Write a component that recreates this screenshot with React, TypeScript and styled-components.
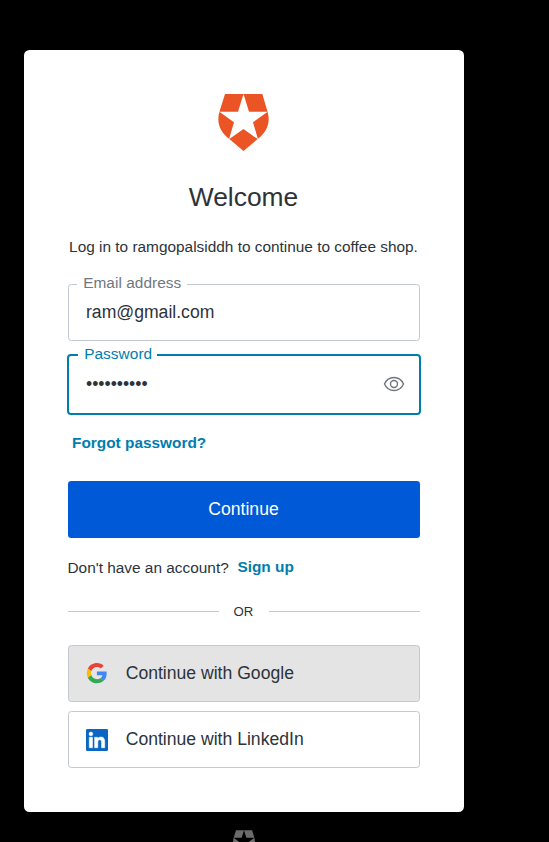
import React from 'react';
import styled, { createGlobalStyle, css } from 'styled-components';

const GlobalStyle = createGlobalStyle`
  *, *::before, *::after { box-sizing: border-box; }
  html, body { margin: 0; background: #000; overflow: hidden; }
  body, input, button { font-family: "Liberation Sans", Arial, sans-serif; }
`;

const Page = styled.main`
  width: 100%;
  height: 842px;
  padding: 50px 0 0 24px;
  overflow: hidden;
  background: #000;
`;

const Column = styled.div`
  width: 440px;
  display: flex;
  flex-direction: column;
  align-items: center;
`;

const Card = styled.section`
  width: 440px;
  height: 762px;
  padding: 44px;
  display: flex;
  flex-direction: column;
  background: #fff;
  border-radius: 5.5px;
  color: #2d333a;
`;

const LogoSlot = styled.div`
  height: 57px;
  display: flex;
  justify-content: center;
  padding-right: 1px;
`;

const FooterLogo = styled.div`
  margin-top: 18px;
  padding-right: 1px;
  height: 25px;
`;

const Title = styled.h1`
  margin: 30px 1px 0 0;
  font-size: 26.4px;
  font-weight: 400;
  line-height: 32px;
  text-align: center;
`;

const Description = styled.p`
  margin: 24px 1px 0 0;
  font-size: 15.4px;
  line-height: 20px;
  text-align: center;
  white-space: nowrap;
`;

const Field = styled.div<{ $focused?: boolean }>`
  position: relative;
  display: flex;
  align-items: center;
  flex: none;
  background: #fff;
  ${({ $focused }) =>
    $focused
      ? css`
          height: 61px;
          margin: 13px -1px 0;
          border: 2px solid #007dad;
          border-radius: 4px;
          padding: 0 14px 0 17px;
        `
      : css`
          height: 57px;
          margin-top: 27px;
          border: 1px solid #c2c8d0;
          border-radius: 3.3px;
          padding: 0 16px 0 17px;
        `}
`;

const FieldLabel = styled.label<{ $focused?: boolean }>`
  position: absolute;
  left: ${({ $focused }) => ($focused ? 9 : 8.4)}px;
  top: -11px;
  padding: ${({ $focused }) => ($focused ? '0 5px 0 6.2px' : '0 6px 0 5.8px')};
  background: #fff;
  color: ${({ $focused }) => ($focused ? '#007dad' : '#6f7780')};
  font-size: 15.4px;
  letter-spacing: 0.05px;
  line-height: 18px;
  white-space: nowrap;
`;

const Input = styled.input`
  flex: 1;
  min-width: 0;
  height: 100%;
  padding: 0;
  border: 0;
  outline: 0;
  background: transparent;
  color: #2d333a;
  font-size: 17.6px;
`;

const Link = styled.a`
  color: #007dad;
  font-size: 15.4px;
  font-weight: 700;
  line-height: 18px;
  text-decoration: none;
`;

const ForgotRow = styled.div`
  display: flex;
  height: 18px;
  margin: 19px 0 29px;
  padding-left: 4px;
`;

const PrimaryButton = styled.button`
  flex: none;
  height: 57px;
  padding: 0 1px 0 0;
  border: 0;
  border-radius: 3.3px;
  background: #0059d6;
  color: #fff;
  font-size: 17.6px;
`;

const SignUpRow = styled.p`
  display: flex;
  height: 18px;
  margin: 20px 0 0 -0.5px;
  font-size: 15.4px;
  line-height: 20px;
  white-space: pre;
  gap: 8.7px;
`;

const Divider = styled.div`
  display: flex;
  align-items: center;
  height: 18px;
  margin: 26px 0 25px;
  font-size: 13.2px;
  &::before, &::after {
    content: "";
    flex: 1;
    height: 1px;
    background: #c2c8d0;
  }
`;

const DividerText = styled.span`
  width: 50px;
  padding-right: 1px;
  text-align: center;
`;

const SocialButton = styled.button<{ $hovered?: boolean }>`
  display: flex;
  flex: none;
  align-items: center;
  gap: 17.7px;
  height: 57px;
  padding: 0 17px;
  border: 1px solid #c2c8d0;
  border-radius: 3.3px;
  background: ${({ $hovered }) => ($hovered ? '#e4e4e4' : '#fff')};
  color: #2d333a;
  font-size: 17.6px;
  & + & { margin-top: 9px; }
`;

const SocialIcon = styled.svg`
  display: block;
  flex: none;
  width: 22px;
  height: 22px;
`;

function Shield({ width, height, color, star }: { width: number; height: number; color: string; star: string }) {
  return (
    <svg width={width} height={height} viewBox="42 30 153 171" aria-hidden="true">
      <path fill={color} d="M63 30H175L190 81C201 114 189 145 161 165L118.500 201L76 165C48 145 36 114 47 81Z" />
      <path fill={star} d="M118.500 30L135 83H191L147 115L162 166L118.500 135L75 166L90 115L46 83H102Z" />
    </svg>
  );
}

function EyeIcon() {
  return (
    <svg width="22" height="24" viewBox="0 0 22 24" fill="none" stroke="#6f7780" strokeWidth="1.400" aria-hidden="true">
      <path d="M1.500 11C3.300 6.900 6.800 4.500 11 4.500S18.700 6.900 20.500 11C18.700 15.100 15.200 17.500 11 17.500S3.300 15.100 1.500 11Z" />
      <circle cx="11" cy="11" r="3.500" />
    </svg>
  );
}

function GoogleIcon() {
  return (
    <SocialIcon viewBox="-1.800 0 52 52" aria-hidden="true">
      <path fill="#EA4335" d="M24 9.500c3.540 0 6.710 1.220 9.210 3.600l6.850-6.850C35.900 2.380 30.470 0 24 0 14.620 0 6.510 5.380 2.560 13.220l7.980 6.190C12.430 13.720 17.740 9.500 24 9.500z" />
      <path fill="#4285F4" d="M46.980 24.550c0-1.570-.15-3.090-.38-4.550H24v9.020h12.940c-.58 2.960-2.260 5.480-4.780 7.180l7.730 6c4.510-4.180 7.090-10.360 7.090-17.650z" />
      <path fill="#FBBC05" d="M10.530 28.590c-.48-1.450-.76-2.990-.76-4.590s.27-3.140.76-4.590l-7.980-6.190C.92 16.460 0 20.120 0 24c0 3.880.92 7.540 2.560 10.780l7.970-6.190z" />
      <path fill="#34A853" d="M24 48c6.480 0 11.930-2.130 15.890-5.810l-7.730-6c-2.150 1.450-4.920 2.300-8.160 2.300-6.260 0-11.570-4.220-13.470-9.910l-7.980 6.190C6.510 42.620 14.620 48 24 48z" />
    </SocialIcon>
  );
}

function LinkedInIcon() {
  return (
    <SocialIcon viewBox="0 0 24 24" aria-hidden="true">
      <rect width="24" height="24" rx="1.500" fill="#0a66c2" />
      <path
        fill="#fff"
        stroke="#fff"
        strokeWidth="0.500"
        d="M5.340 7.430a2.060 2.060 0 1 1 0-4.130 2.060 2.060 0 0 1 0 4.130zM3.560 9h3.560v11.450H3.560zM9.350 9h3.410v1.560h.05c.48-.9 1.640-1.850 3.370-1.850 3.600 0 4.270 2.370 4.270 5.460v6.280h-3.560v-5.570c0-1.330-.02-3.040-1.850-3.040-1.850 0-2.130 1.450-2.130 2.940v5.670H9.350z"
      />
    </SocialIcon>
  );
}

export default function App() {
  return (
    <>
      <GlobalStyle />
      <Page>
        <Column>
          <Card>
            <LogoSlot>
              <Shield width={51} height={57} color="#eb5424" star="#fff" />
            </LogoSlot>
            <Title>Welcome</Title>
            <Description>Log in to ramgopalsiddh to continue to coffee shop.</Description>
            <Field>
              <FieldLabel htmlFor="email">Email address</FieldLabel>
              <Input id="email" type="text" defaultValue="ram@gmail.com" />
            </Field>
            <Field $focused>
              <FieldLabel $focused htmlFor="password">Password</FieldLabel>
              <Input id="password" type="password" defaultValue="0123456789" />
              <EyeIcon />
            </Field>
            <ForgotRow>
              <Link>Forgot password?</Link>
            </ForgotRow>
            <PrimaryButton>Continue</PrimaryButton>
            <SignUpRow>
              <span>Don't have an account?</span>
              <Link>Sign up</Link>
            </SignUpRow>
            <Divider>
              <DividerText>OR</DividerText>
            </Divider>
            <SocialButton $hovered>
              <GoogleIcon />
              <span>Continue with Google</span>
            </SocialButton>
            <SocialButton>
              <LinkedInIcon />
              <span>Continue with LinkedIn</span>
            </SocialButton>
          </Card>
          <FooterLogo>
            <Shield width={22} height={25} color="#6b6b6b" star="#000" />
          </FooterLogo>
        </Column>
      </Page>
    </>
  );
}
